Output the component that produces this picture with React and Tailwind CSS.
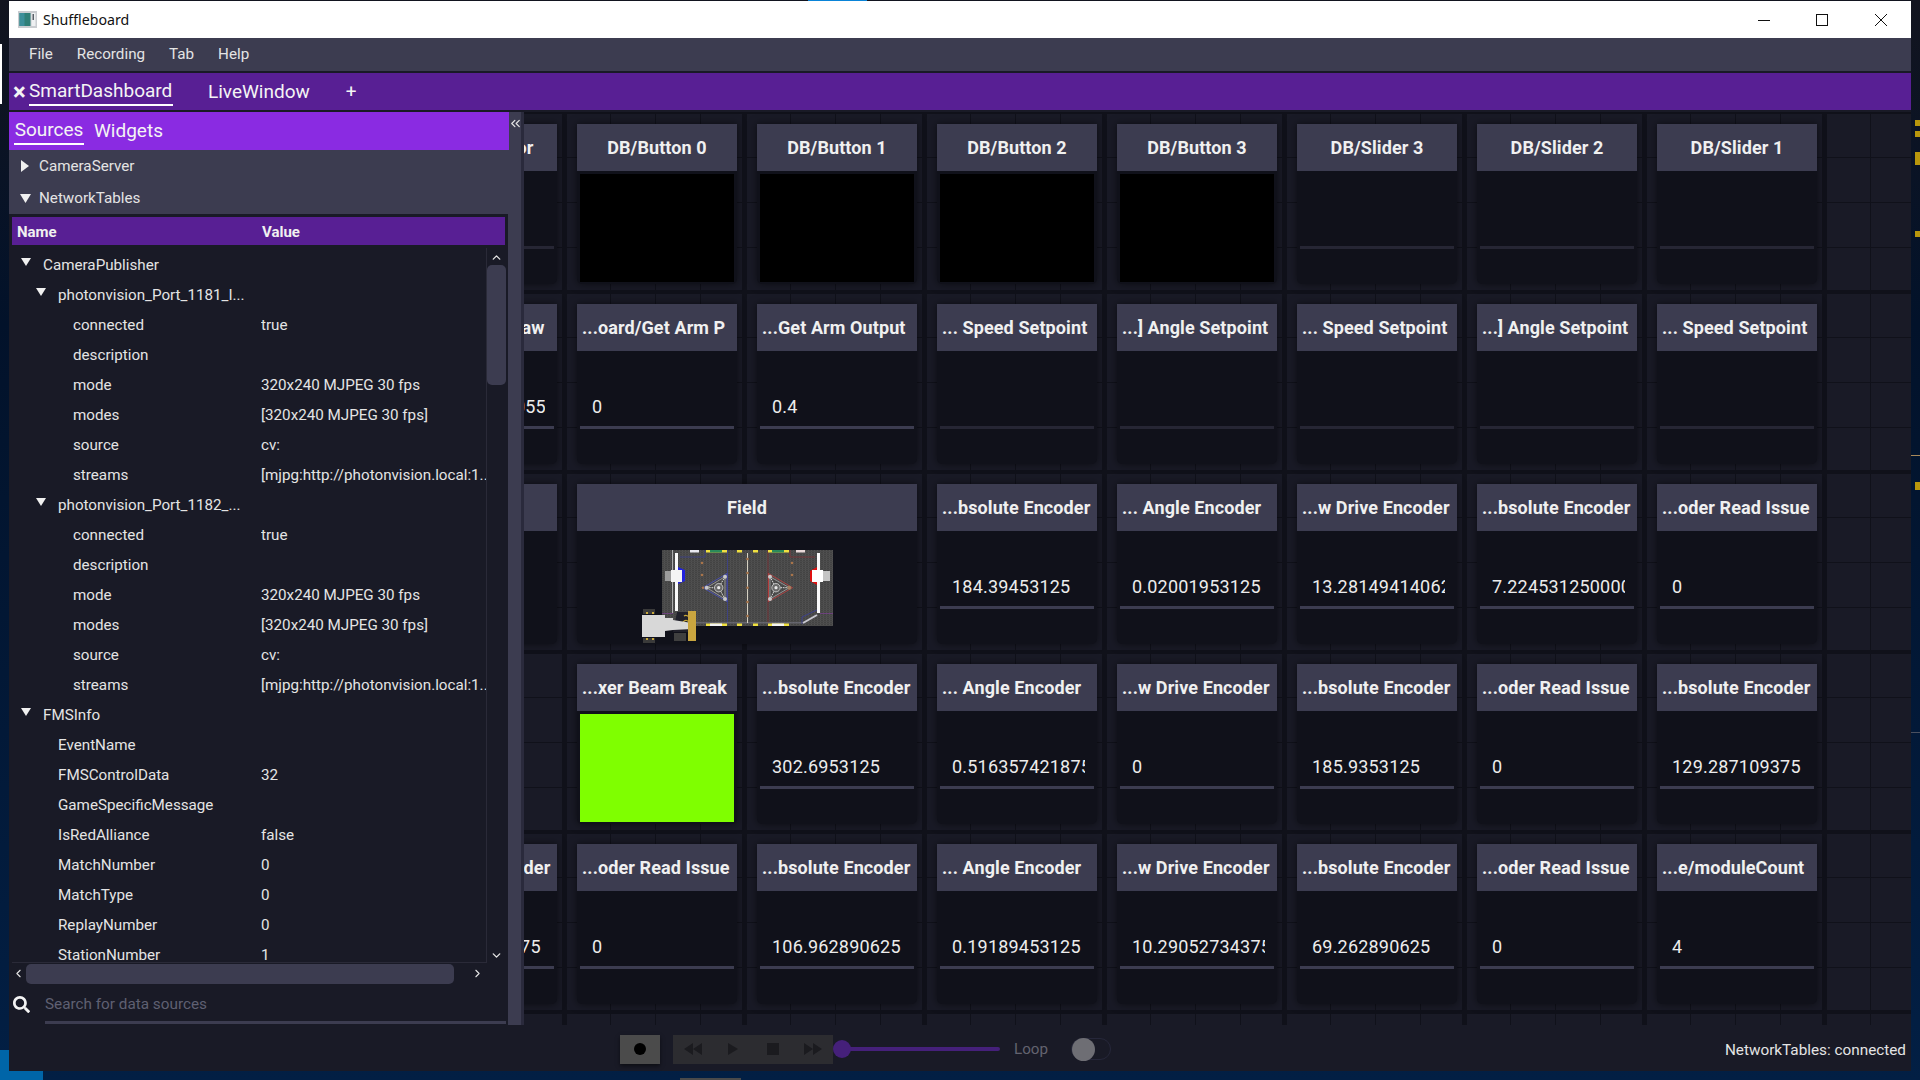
import React from 'react';
import { ChevronUp, ChevronDown, ChevronLeft, ChevronRight, ChevronsLeft } from 'lucide-react';
import { FaSearch } from 'react-icons/fa';

const treeRows = [
  { name: 'CameraPublisher', level: 0, open: true },
  { name: 'photonvision_Port_1181_I...', level: 1, open: true },
  { name: 'connected', value: 'true', level: 2 },
  { name: 'description', level: 2 },
  { name: 'mode', value: '320x240 MJPEG 30 fps', level: 2 },
  { name: 'modes', value: '[320x240 MJPEG 30 fps]', level: 2 },
  { name: 'source', value: 'cv:', level: 2 },
  { name: 'streams', value: '[mjpg:http://photonvision.local:1...', level: 2 },
  { name: 'photonvision_Port_1182_...', level: 1, open: true },
  { name: 'connected', value: 'true', level: 2 },
  { name: 'description', level: 2 },
  { name: 'mode', value: '320x240 MJPEG 30 fps', level: 2 },
  { name: 'modes', value: '[320x240 MJPEG 30 fps]', level: 2 },
  { name: 'source', value: 'cv:', level: 2 },
  { name: 'streams', value: '[mjpg:http://photonvision.local:1...', level: 2 },
  { name: 'FMSInfo', level: 0, open: true },
  { name: 'EventName', level: 1 },
  { name: 'FMSControlData', value: '32', level: 1 },
  { name: 'GameSpecificMessage', level: 1 },
  { name: 'IsRedAlliance', value: 'false', level: 1 },
  { name: 'MatchNumber', value: '0', level: 1 },
  { name: 'MatchType', value: '0', level: 1 },
  { name: 'ReplayNumber', value: '0', level: 1 },
  { name: 'StationNumber', value: '1', level: 1 },
];

const tiles = [
  { title: 'Intake Sensor', dim: true },
  { title: 'DB/Button 0', box: 'black' },
  { title: 'DB/Button 1', box: 'black' },
  { title: 'DB/Button 2', box: 'black' },
  { title: 'DB/Button 3', box: 'black' },
  { title: 'DB/Slider 3', dim: true },
  { title: 'DB/Slider 2', dim: true },
  { title: 'DB/Slider 1', dim: true },

  { title: '...Drive/Gyro Raw', value: '-123.456789055' },
  { title: '...oard/Get Arm P', value: '0' },
  { title: '...Get Arm Output', value: '0.4' },
  { title: '... Speed Setpoint', dim: true },
  { title: '...] Angle Setpoint', dim: true },
  { title: '... Speed Setpoint', dim: true },
  { title: '...] Angle Setpoint', dim: true },
  { title: '... Speed Setpoint', dim: true },

  { title: '', blank: true },
  { title: 'Field', field: true },
  { title: '...bsolute Encoder', value: '184.39453125' },
  { title: '... Angle Encoder', value: '0.02001953125' },
  { title: '...w Drive Encoder', value: '13.28149414062' },
  { title: '...bsolute Encoder', value: '7.224531250000' },
  { title: '...oder Read Issue', value: '0' },

  { empty: true },
  { title: '...xer Beam Break', box: 'green' },
  { title: '...bsolute Encoder', value: '302.6953125' },
  { title: '... Angle Encoder', value: '0.516357421875' },
  { title: '...w Drive Encoder', value: '0' },
  { title: '...bsolute Encoder', value: '185.9353125' },
  { title: '...oder Read Issue', value: '0' },
  { title: '...bsolute Encoder', value: '129.287109375' },

  { title: '...bsolute Encoder', value: '2278.69140675' },
  { title: '...oder Read Issue', value: '0' },
  { title: '...bsolute Encoder', value: '106.962890625' },
  { title: '... Angle Encoder', value: '0.19189453125' },
  { title: '...w Drive Encoder', value: '10.29052734375' },
  { title: '...bsolute Encoder', value: '69.262890625' },
  { title: '...oder Read Issue', value: '0' },
  { title: '...e/moduleCount', value: '4' },
];

const TriangleDown = ({ className }) => (
  <svg viewBox="0 0 10 8" className={className}>
    <polygon points="0,0 10,0 5,8" fill="#f0f0f0" />
  </svg>
);

const TriangleRight = ({ className }) => (
  <svg viewBox="0 0 8 12" className={className}>
    <polygon points="0,0 8,6 0,12" fill="#f0f0f0" />
  </svg>
);

const AppIcon = () => (
  <svg viewBox="0 0 19 17" className="w-[19px] h-[17px] shrink-0">
    <rect x="0" y="0" width="19" height="17" fill="#c9ccd0" />
    <rect x="1.5" y="2" width="11" height="13" fill="#2f7f78" />
    <rect x="1.5" y="2" width="5" height="13" fill="#3c8f9a" />
    <rect x="13.5" y="2" width="4" height="13" fill="#eef0f2" />
    <rect x="14.5" y="3" width="1.5" height="6" fill="#5a6068" />
  </svg>
);

const FieldDrawing = () => (
  <svg viewBox="0 0 220 110" className="w-[220px] h-[110px]">
    <defs>
      <pattern id="carpet" width="3" height="2" patternUnits="userSpaceOnUse">
        <rect width="3" height="2" fill="#4b4b4b" />
        <rect width="3" height="1" fill="#434343" />
        <rect width="1" height="1" fill="#525252" />
      </pattern>
    </defs>
    <rect x="25" y="10" width="171" height="76" fill="url(#carpet)" />

    {/* zone lines */}
    <path d="M43 17H68V10" stroke="#3a3f9a" strokeWidth="0.7" fill="none" />
    <path d="M153 10V17H178" stroke="#8a2f35" strokeWidth="0.7" fill="none" />
    <line x1="90.5" y1="10" x2="90.5" y2="83" stroke="#3a3f9a" strokeWidth="0.7" />
    <line x1="131" y1="10" x2="131" y2="83" stroke="#8a2f35" strokeWidth="0.7" />
    <line x1="25" y1="73.5" x2="36" y2="73.5" stroke="#7b3f92" strokeWidth="0.7" />
    <line x1="183" y1="73.5" x2="196" y2="73.5" stroke="#7b3f92" strokeWidth="0.7" />
    <line x1="55" y1="82.8" x2="165" y2="82.8" stroke="#7c7c8c" strokeWidth="0.8" />
    <path d="M165 84V77L180 70" stroke="#3a3f9a" strokeWidth="0.8" fill="none" />
    <line x1="166" y1="83" x2="180" y2="75" stroke="#c8c8d0" strokeWidth="2" />

    {/* walls and centre */}
    <line x1="35.5" y1="10" x2="35.5" y2="73" stroke="#c8c8c8" strokeWidth="0.8" />
    <rect x="38" y="13" width="3" height="58" fill="#fafafa" />
    <rect x="180" y="13" width="3" height="60" fill="#fafafa" />
    <line x1="110.5" y1="13" x2="110.5" y2="83" stroke="#e4e0d0" strokeWidth="0.9" />

    {/* alliance stations */}
    <polygon points="41,27 48,30 48,41 41,44" fill="#2222dd" />
    <rect x="28" y="31" width="7" height="10" fill="#9c9c9c" />
    <rect x="34" y="30" width="11" height="12" fill="#f4f4f4" />
    <polygon points="180,27 173,31 173,41 180,45" fill="#e01010" />
    <rect x="175" y="30" width="11" height="12" fill="#ffffff" />
    <rect x="186" y="31" width="7" height="10" fill="#c4c4c4" />

    {/* hubs */}
    <polygon points="66,47.7 90,33.5 90,61.5" fill="none" stroke="#4a52c8" strokeWidth="0.8" />
    <polygon points="155.5,47.7 131.5,33.5 131.5,61.5" fill="none" stroke="#c8403f" strokeWidth="0.8" />
    <polygon points="69.7,47.7 88,36.7 88,59" fill="none" stroke="#b4b4b4" strokeWidth="0.7" />
    <polygon points="152.3,47.7 133,36.7 133,59" fill="none" stroke="#b4b4b4" strokeWidth="0.7" />
    <path d="M69.7 47.7H81.7M88 36.7L81.7 47.7L88 59" stroke="#dcdcdc" strokeWidth="1" strokeDasharray="1.6 0.8" fill="none" />
    <path d="M152.3 47.7H139M133 36.7L139 47.7L133 59" stroke="#dcdcdc" strokeWidth="1" strokeDasharray="1.6 0.8" fill="none" />
    {[81.7, 139].map((cx) => (
      <g key={cx}>
        <circle cx={cx} cy="47.7" r="4.2" fill="#6a6a6a" stroke="#d8d8d8" strokeWidth="0.8" />
        <circle cx={cx} cy="47.7" r="1.6" fill="#e8e8e8" />
      </g>
    ))}
    {[[69.7, 47.7], [88, 36.7], [88, 59], [133, 36.7], [133, 59]].map(([cx, cy]) => (
      <circle key={`${cx}-${cy}`} cx={cx} cy={cy} r="2" fill="#c8c8c8" />
    ))}
    <circle cx="152.3" cy="47.7" r="2" fill="#a08060" />

    {/* game pieces */}
    {[[65, 23], [65, 35], [66, 47.7], [110.5, 19], [110.5, 33], [110.5, 47.7], [110.5, 62], [110.5, 76], [155, 23], [155, 35]].map(([x, y], i) => (
      <circle key={i} cx={x} cy={y} r="1.3" fill="#a8744a" />
    ))}

    {/* top and bottom stations */}
    {[10, 83.5].map((y) => (
      <g key={y}>
        <rect x="69" y={y} width="21" height="2.5" fill="#f0e040" />
        <rect x="73" y={y} width="12" height="2.5" fill={y === 10 ? '#2a8a5a' : '#f4f4f4'} />
        <rect x="100" y={y} width="5" height="2.5" fill="#f0e040" />
        <rect x="116" y={y} width="5" height="2.5" fill="#f0e040" />
        <rect x="131" y={y} width="21" height="2.5" fill="#f0e040" />
        <rect x="135" y={y} width="12" height="2.5" fill={y === 10 ? '#2a8a5a' : '#f4f4f4'} />
      </g>
    ))}
    <rect x="53" y="10" width="9" height="2.5" fill="#e8e8f0" />
    <rect x="159" y="10" width="9" height="2.5" fill="#e8d8d8" />

    {/* robot */}
    <rect x="6" y="69" width="12" height="5" fill="#3a3a3a" />
    <rect x="6" y="98" width="12" height="5" fill="#3a3a3a" />
    <rect x="9" y="72" width="2" height="2" fill="#c8a83a" />
    <rect x="15" y="72" width="2" height="2" fill="#c8a83a" />
    <rect x="9" y="98" width="2" height="2" fill="#c8a83a" />
    <rect x="15" y="98" width="2" height="2" fill="#c8a83a" />
    <path d="M40 72H56V92H36Z" fill="#20202a" />
    <path d="M47 76C50 74 54 78 56 83M44 85C48 78 52 80 53 85" stroke="#c8a83a" strokeWidth="1.2" fill="none" />
    <polygon points="5,75 28,75 28,78 36,78 36,80 55,83 55,89 36,90 28,91 28,97 5,97" fill="#d8d8d8" />
    <rect x="37" y="93" width="12" height="8" fill="#3f3f3f" />
    <rect x="51" y="71" width="8" height="30" fill="#c9a53f" />
  </svg>
);

const Tile = ({ tile }) => {
  if (tile.empty) return <div />;
  // cut-off titles sit against the left edge of the header, the others are centred
  const cut = tile.title?.startsWith('...');
  return (
    <div className={`flex flex-col bg-[#10111a] rounded-b-[5px] shadow-[0_0_8px_rgba(0,0,0,0.55)] ${tile.field ? 'col-span-2' : ''}`}>
      <div className={`h-[47px] shrink-0 bg-[#3c3c50] flex items-center text-[18px] font-bold tracking-[0.1px] text-[#f0f0f0] whitespace-nowrap overflow-hidden ${cut ? 'justify-start pl-[5px]' : 'justify-center'}`}>
        {tile.title}
      </div>
      {tile.box === 'black' && <div className="mx-[3px] mt-[3px] h-[108px] bg-black" />}
      {tile.box === 'green' && <div className="mx-[3px] mt-[3px] h-[108px] bg-[#7fff00]" />}
      {tile.field && (
        <div className="flex justify-center pt-[9px]">
          <FieldDrawing />
        </div>
      )}
      {!tile.box && !tile.field && !tile.blank && (
        <div className="mx-[3px] mt-[38px] h-[40px] flex flex-col justify-end">
          <div className="ml-3 mr-[9px] h-[37px] pb-[2px] flex items-center overflow-hidden whitespace-nowrap text-[18px] tracking-[0.2px] text-[#ececec]">
            {tile.value}
          </div>
          <div className={`h-[3px] ${tile.dim ? 'bg-[#262634]' : 'bg-[#3c3c50]'}`} />
        </div>
      )}
    </div>
  );
};

const Sidebar = () => (
  <div className="w-[500px] shrink-0 flex flex-col bg-[#3c3c50]">
    <div className="h-[38px] shrink-0 bg-[#8a2be2] flex items-start pl-[5px] gap-[10px] text-[19px] text-[#f4f4f4]">
      <div className="h-[33px] w-[70px] pt-[6px] flex items-center justify-center border-b-[2px] border-white">Sources</div>
      <div className="h-[33px] pt-[6px] flex items-center">Widgets</div>
    </div>
    <div className="h-[32px] shrink-0 flex items-center text-[15.2px] text-[#e4e4e4]">
      <TriangleRight className="w-[8px] h-[12px] ml-[12px] mr-[10px]" />
      CameraServer
    </div>
    <div className="h-[32px] shrink-0 flex items-center text-[15.2px] text-[#e4e4e4]">
      <TriangleDown className="w-[11px] h-[9px] ml-[11px] mr-[8px]" />
      NetworkTables
    </div>
    <div className="flex-1 flex flex-col bg-[#191a26] border-l-[3px] border-t-[3px] border-[#191a26] mr-[1px] min-h-0">
      <div className="h-[28px] shrink-0 mr-[3px] pt-[2px] bg-[#581f94] flex items-center text-[15px] font-bold text-[#f0f0f0]">
        <div className="w-[250px] pl-[5px]">Name</div>
        <div>Value</div>
      </div>
      <div className="h-[3px] shrink-0" />
      <div className="h-[715px] shrink-0 flex">
        <div className="w-[475px] border-r border-b border-[#2a2a38] overflow-hidden pt-[2px]">
          {treeRows.map((row, i) => (
            <div key={i} className="h-[30px] flex items-center text-[15.2px] text-[#e4e4e4] whitespace-nowrap">
              <div className={`w-[249px] shrink-0 flex items-center ${row.level === 0 ? 'pl-[9px]' : row.level === 1 ? (row.open ? 'pl-[24px]' : 'pl-[46px]') : 'pl-[61px]'}`}>
                {row.open && <TriangleDown className="w-[10px] h-[8px] mr-[12px] mb-[5px]" />}
                {row.name}
              </div>
              <div className="overflow-hidden">{row.value}</div>
            </div>
          ))}
        </div>
        <div className="w-[19px] flex flex-col items-center text-[#e4e4e4]">
          <ChevronUp size={13} strokeWidth={2.5} className="mt-[3px] shrink-0" />
          <div className="w-full h-[120px] mt-px rounded-[5px] bg-[#3c3c50]" />
          <div className="flex-1" />
          <ChevronDown size={13} strokeWidth={2.5} className="mb-[1px] shrink-0" />
        </div>
      </div>
      <div className="h-[21px] shrink-0 flex items-center text-[#e4e4e4]">
        <ChevronLeft size={13} strokeWidth={2} className="ml-[0px] shrink-0" />
        <div className="w-[428px] h-[20px] ml-[1px] rounded-[5px] bg-[#3c3c50]" />
        <ChevronRight size={13} strokeWidth={2} className="ml-[17px] shrink-0" />
      </div>
      <div className="flex-1 flex items-center relative">
        <FaSearch size={17} className="ml-[1px] text-[#f4f4f4] shrink-0" />
        <div className="ml-[15px] flex-1 mr-[2px] h-[39px] pt-[2px] border-b-[3px] border-[#3c3c50] flex items-center text-[15.3px] text-[#5f6072]">
          Search for data sources
        </div>
      </div>
    </div>
  </div>
);

const BottomBar = () => (
  <div className="h-[46px] shrink-0 pt-[2px] bg-[#191a26] flex items-center relative text-[15.2px]">
    <div className="ml-[611px] w-[40px] h-[29px] bg-[#4b4b4b] shadow-[0_2px_4px_rgba(0,0,0,0.5)] flex items-center justify-center">
      <div className="w-3 h-3 rounded-full bg-black" />
    </div>
    <div className="ml-[13px] flex h-[29px] bg-[#2c2c30]">
      <div className="w-[40px] flex items-center justify-center">
        <svg viewBox="0 0 18 12" className="w-[18px] h-[12px]"><path d="M9 0L0 6l9 6zM18 0L9 6l9 6z" fill="#1b1b1f" /></svg>
      </div>
      <div className="w-[40px] flex items-center justify-center">
        <svg viewBox="0 0 10 12" className="w-[10px] h-[12px]"><path d="M0 0l10 6-10 6z" fill="#1b1b1f" /></svg>
      </div>
      <div className="w-[40px] flex items-center justify-center">
        <div className="w-3 h-3 bg-[#1b1b1f]" />
      </div>
      <div className="w-[40px] flex items-center justify-center">
        <svg viewBox="0 0 18 12" className="w-[18px] h-[12px]"><path d="M0 0l9 6-9 6zM9 0l9 6-9 6z" fill="#1b1b1f" /></svg>
      </div>
    </div>
    <div className="flex items-center">
      <div className="w-[18px] h-[18px] rounded-full bg-[#45207a]" />
      <div className="w-[150px] h-[4px] -ml-px rounded-r-full bg-[#45207a]" />
    </div>
    <div className="ml-[14px] text-[#63636f]">Loop</div>
    <div className="ml-[23px] relative w-[40px] h-[22px] rounded-full border border-[#26273a]">
      <div className="absolute left-0 top-[-1px] w-[23px] h-[23px] rounded-full bg-[#6e6e74]" />
    </div>
    <div className="absolute right-[5px] top-[14px] text-[15.3px] text-[#e4e4e4]">NetworkTables: connected</div>
  </div>
);

const App = () => (
  <div className="relative w-[1920px] h-[1080px] overflow-hidden bg-[linear-gradient(to_bottom,#12141f,#02122a_30%,#021f44)] pt-px pl-[9px] font-['Roboto',sans-serif]">
    {/* bits of the desktop around the window */}
    <div className="absolute left-0 top-[44px] w-[2px] h-[60px] bg-white" />
    <div className="absolute left-0 bottom-0 w-[43px] h-[30px] bg-[#0065a8]" />
    <div className="absolute left-[680px] bottom-0 w-[61px] h-[2px] bg-[#4a4a4a]" />
    <div className="absolute left-[808px] top-0 w-[59px] h-px bg-[#0a84d8]" />
    <div className="absolute right-0 top-[120px] w-[5px] h-[6px] bg-[#b8960c]" />
    <div className="absolute right-0 top-[131px] w-[5px] h-[6px] bg-[#b8960c]" />
    <div className="absolute right-0 top-[152px] w-[5px] h-[13px] bg-[#b8960c]" />
    <div className="absolute right-0 top-[231px] w-[5px] h-[6px] bg-[#b8960c]" />
    <div className="absolute right-0 top-[455px] w-[9px] h-px bg-[#a8895a]" />
    <div className="absolute right-0 top-[482px] w-[5px] h-[8px] bg-[#b8960c]" />
    <div className="absolute right-0 top-[732px] w-[9px] h-px bg-[#4a5060]" />

    <div className="w-[1902px] h-[1070px] flex flex-col bg-[#191a26] relative">
      {/* title bar */}
      <div className="h-[37px] shrink-0 bg-white flex items-center font-['Noto_Sans',sans-serif] text-[14.2px] text-[#111]">
        <div className="ml-[9px] mr-[6px]"><AppIcon /></div>
        Shuffleboard
        <div className="flex-1" />
        <svg viewBox="0 0 12 12" className="w-3 h-3 mr-[46px]"><line x1="0" y1="6.5" x2="12" y2="6.5" stroke="#111" /></svg>
        <svg viewBox="0 0 12 12" className="w-3 h-3 mr-[47px]"><rect x="0.5" y="0.5" width="11" height="11" fill="none" stroke="#111" /></svg>
        <svg viewBox="0 0 12 12" className="w-3 h-3 mr-[24px]"><path d="M0 0L12 12M12 0L0 12" stroke="#111" /></svg>
      </div>

      {/* menu */}
      <div className="h-[33px] shrink-0 bg-[#3c3c50] flex items-center text-[15.2px] text-[#e4e4e4] pl-[20px] gap-[24px]">
        <span>File</span>
        <span>Recording</span>
        <span>Tab</span>
        <span>Help</span>
      </div>
      <div className="h-[2px] shrink-0 bg-[#191a26]" />

      {/* tabs */}
      <div className="h-[38px] shrink-0 bg-[#581f94] flex items-start text-[19px] text-[#f4f4f4] border-b border-[#191a26]">
        <span className="ml-[4px] mt-[3px] w-[16px] h-[31px] flex items-center font-bold text-[24px]">×</span>
        <div className="h-[33px] w-[144px] pt-[5px] flex items-center border-b-[2px] border-white">SmartDashboard</div>
        <div className="h-[33px] ml-[35px] pt-[5px] flex items-center">LiveWindow</div>
        <div className="h-[33px] ml-[36px] pt-[5px] flex items-center">+</div>
      </div>
      <div className="h-px shrink-0 bg-[#191a26]" />

      <div className="h-[913px] shrink-0 flex min-h-0">
        <Sidebar />
        <div className="w-[15px] shrink-0 bg-[#3c3c50] border-r-[3px] border-[#2a2a3c] text-[#e4e4e4]">
          <ChevronsLeft size={15} strokeWidth={2} className="mt-[4px] -ml-px" />
        </div>
        <div className="flex-1 overflow-hidden bg-[#191a26] bg-[linear-gradient(to_right,#10111a_5px,transparent_5px),linear-gradient(to_bottom,#10111a_4px,transparent_4px),linear-gradient(to_right,#10111a_1px,transparent_1px),linear-gradient(to_bottom,#10111a_1px,transparent_1px)] bg-[size:180px_180px,180px_180px,45px_45px,45px_45px] bg-[position:38px_0,0_178px,41px_0,0_0]">
          <div className="-ml-[127px] mt-3 grid grid-cols-[repeat(8,160px)] auto-rows-[160px] gap-5">
            {tiles.map((tile, i) => (
              <Tile key={i} tile={tile} />
            ))}
          </div>
        </div>
      </div>

      <BottomBar />
    </div>
  </div>
);

export default App;
